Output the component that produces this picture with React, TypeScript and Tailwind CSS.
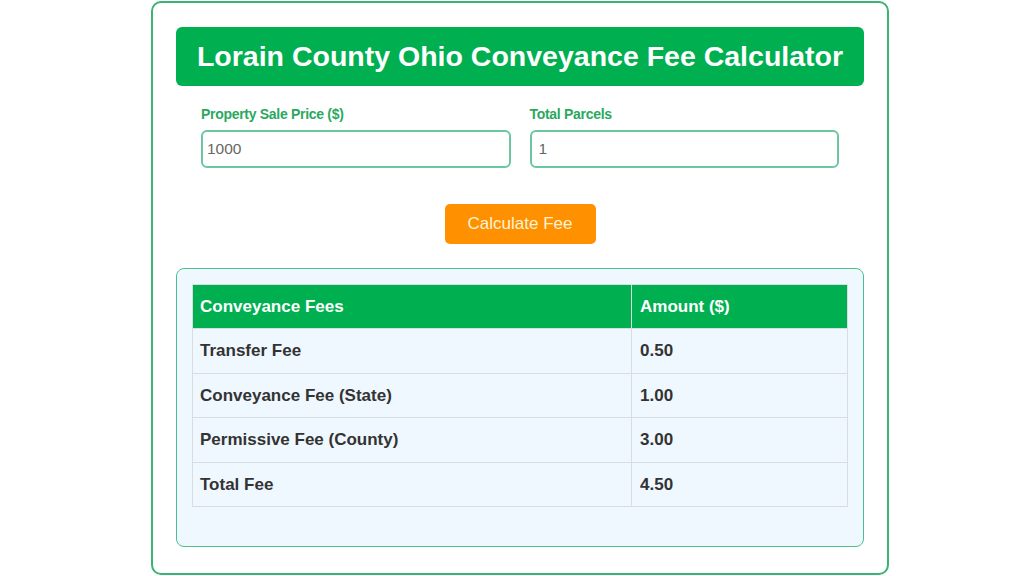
import { useState } from "react";

const rows = [
  { label: "Transfer Fee", amount: "0.50" },
  { label: "Conveyance Fee (State)", amount: "1.00" },
  { label: "Permissive Fee (County)", amount: "3.00" },
  { label: "Total Fee", amount: "4.50" },
];

export default function App() {
  const [price, setPrice] = useState("1000");
  const [parcels, setParcels] = useState("1");

  return (
    <div className="h-[576px] w-[1024px] overflow-hidden bg-white pt-[1px] pl-[151px] font-['Liberation_Sans',Arial,sans-serif]">
      <div className="h-[574px] w-[738px] rounded-[10px] border-2 border-[#3cb371] bg-white px-[23px] pt-[24px]">
        <h1 className="flex h-[59px] items-center justify-center rounded-[6px] bg-[#00b050] text-[28.5px] font-bold text-white">
          Lorain County Ohio Conveyance Fee Calculator
        </h1>

        <div className="mt-[21px] grid grid-cols-2 gap-[19px] px-[25px]">
          <div>
            <label className="mb-[8px] block text-[14px] leading-[15px] font-bold tracking-[-0.3px] text-[#2aa860]">
              Property Sale Price ($)
            </label>
            <input
              value={price}
              onChange={(e) => setPrice(e.target.value)}
              className="h-[38px] w-full rounded-[6px] border-2 border-[#6cc6a2] px-[4px] text-[15.5px] text-[#666] outline-none"
            />
          </div>
          <div>
            <label className="mb-[8px] block text-[14px] leading-[15px] font-bold tracking-[-0.3px] text-[#2aa860]">
              Total Parcels
            </label>
            <input
              value={parcels}
              onChange={(e) => setParcels(e.target.value)}
              className="h-[38px] w-full rounded-[6px] border-2 border-[#6cc6a2] px-[7px] text-[15.5px] text-[#666] outline-none"
            />
          </div>
        </div>

        <div className="mt-[36px] flex justify-center">
          <button className="h-[40px] w-[151px] rounded-[5px] bg-[#ff9000] text-[17px] text-[#fff3d6]">
            Calculate Fee
          </button>
        </div>

        <div className="mt-[24px] h-[279px] rounded-[8px] border-[1.5px] border-[#4cc08a] bg-[#f0f8ff] p-[15px]">
          <table className="w-full border-collapse text-[17px] font-bold">
            <thead>
              <tr className="h-[44px] bg-[#00b050] text-left text-white">
                <th className="w-[439px] border border-[#d8dde3] pl-[7px]">Conveyance Fees</th>
                <th className="border border-[#d8dde3] pl-[8px]">Amount ($)</th>
              </tr>
            </thead>
            <tbody className="text-[#333]">
              {rows.map((r) => (
                <tr key={r.label} className="h-[44.5px]">
                  <td className="border border-[#d8dde3] pl-[7px]">{r.label}</td>
                  <td className="border border-[#d8dde3] pl-[8px]">{r.amount}</td>
                </tr>
              ))}
            </tbody>
          </table>
        </div>
      </div>
    </div>
  );
}
